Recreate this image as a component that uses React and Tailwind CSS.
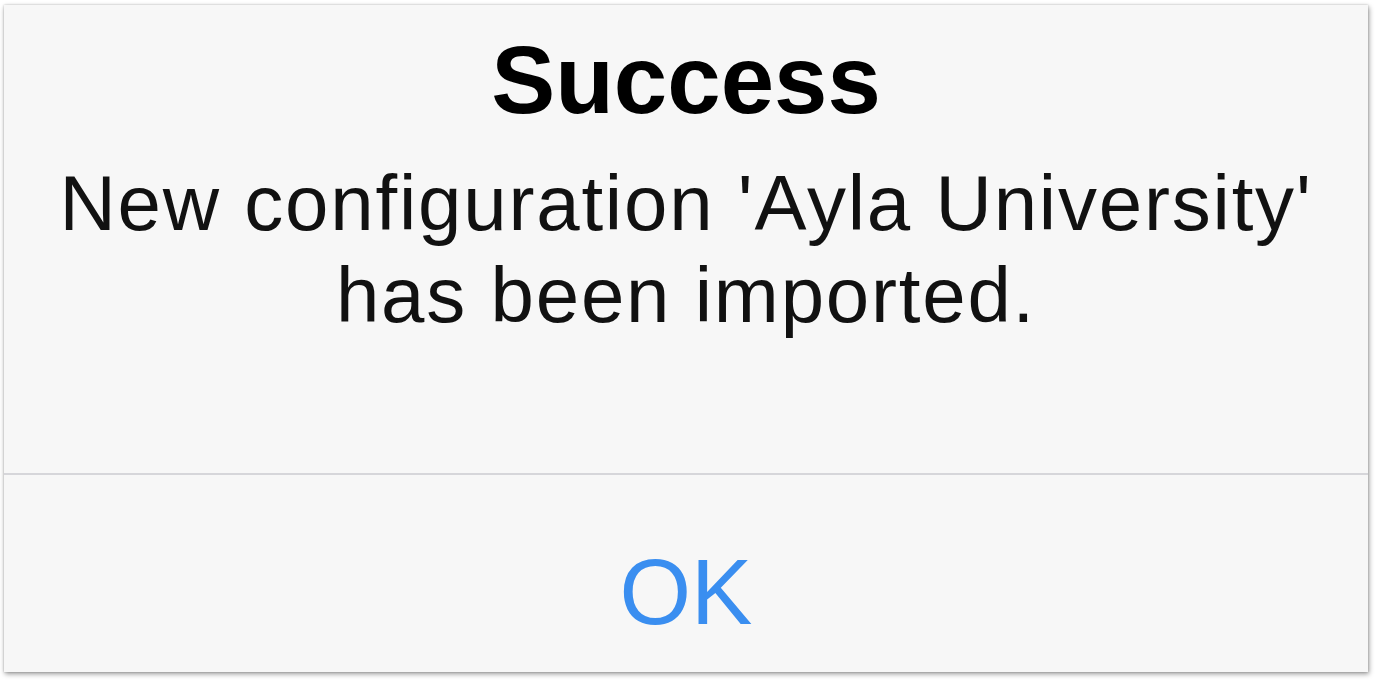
export default function App() {
  return (
    <div className="w-[1376px] h-[684px] bg-white pl-[4px] pt-[5px] overflow-hidden" style={{ fontFamily: '"Liberation Sans", Arial, sans-serif' }}>
      <div className="w-[1364px] h-[667px] bg-[#f7f7f7] flex flex-col shadow-[1px_2px_5px_rgba(0,0,0,0.4),0_0_2px_rgba(0,0,0,0.2)]">
        <div className="h-[468px] flex flex-col items-center pt-[20px] text-black">
          <div className="text-[96px] leading-[110px] font-bold">Success</div>
          <div className="mt-[22px] text-[78px] leading-[92px] tracking-[1.8px] text-center text-[#111]">
            New configuration 'Ayla University'
            <br />
            has been imported.
          </div>
        </div>
        <div className="h-[2px] bg-[#d6d6da]" />
        <div className="flex-1 flex justify-center pt-[67px]">
          <div className="text-[92px] leading-[100px] text-[#3a8ef0]">OK</div>
        </div>
      </div>
    </div>
  );
}
